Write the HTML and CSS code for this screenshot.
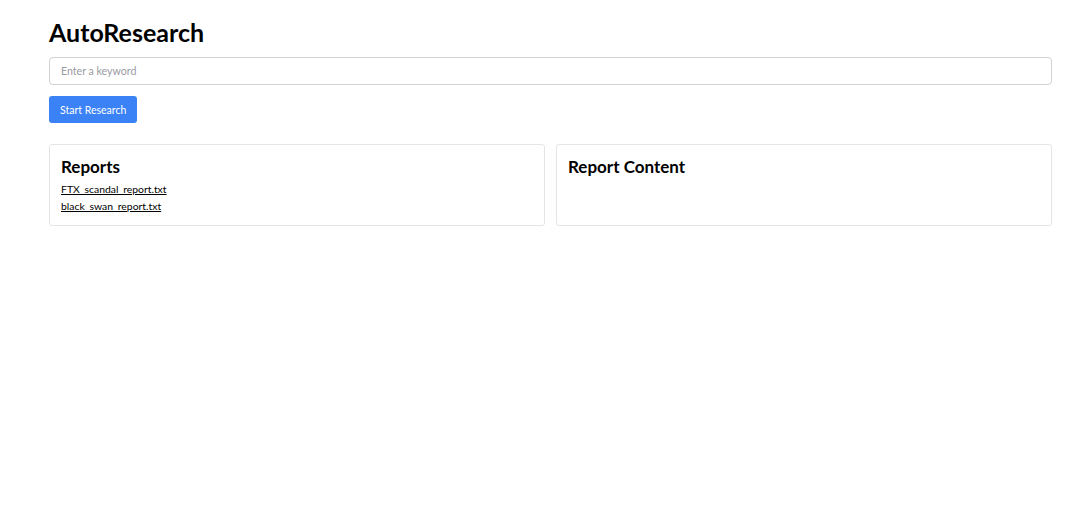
FILE: index.html
```html
<!DOCTYPE html>
<html lang="en">
<head>
    <meta charset="UTF-8">
    <meta name="viewport" content="width=device-width, initial-scale=1.0">
    <title>AutoResearch</title>
    <link rel="stylesheet" href="styles.css">
</head>
<body>
    <div class="container">
        <h1 class="title">AutoResearch</h1>

        <!-- keyword form -->
        <input type="text" class="keyword" placeholder="Enter a keyword">
        <button class="start-btn">Start Research</button>

        <div class="panels">
            <div class="panel">
                <h2 class="panel-title">Reports</h2>
                <ul class="report-list">
                    <li><a href="#">FTX_scandal_report.txt</a></li>
                    <li><a href="#">black_swan_report.txt</a></li>
                </ul>
            </div>
            <div class="panel">
                <h2 class="panel-title">Report Content</h2>
                <div class="report-content"></div>
            </div>
        </div>
    </div>
</body>
</html>
```

FILE: styles.css
```css
/* Page basics */
body {
    margin: 0;
    background-color: #fff;
    color: #000;
    font-family: Lato, "Noto Sans", sans-serif;
}

.container {
    width: 1003px;
    padding: 16px 0 0 49px;
}

.title {
    font-size: 25px;
    font-weight: 700;
    line-height: 32px;
    margin: 0 0 9px;
}

/* Keyword input and button */
.keyword {
    display: block;
    box-sizing: border-box;
    width: 100%;
    height: 28px;
    padding: 0 11px;
    border: 1px solid #d1d1d6;
    border-radius: 4px;
    font-family: inherit;
    font-size: 10.6px;
    color: #333;
    outline: none;
}

.keyword::placeholder {
    color: #9a9aa2;
}

.start-btn {
    display: block;
    margin-top: 11px;
    height: 27px;
    padding: 0 11px;
    border: none;
    border-radius: 3px;
    background-color: #3b82f6;
    color: #fff;
    font-family: inherit;
    font-size: 10.5px;
    cursor: pointer;
}

/* Two panels side by side */
.panels {
    display: grid;
    grid-template-columns: 1fr 1fr;
    gap: 11px;
    margin-top: 21px;
}

.panel {
    box-sizing: border-box;
    height: 82px;
    padding: 11px 11px;
    border: 1px solid #e5e5e8;
    border-radius: 3px;
}

.panel-title {
    font-size: 17px;
    font-weight: 700;
    line-height: 22px;
    margin: 0 0 3px;
}

.report-list {
    list-style: none;
    margin: 0;
    padding: 0;
    font-size: 10.4px;
    line-height: 17px;
}

.report-list a {
    color: #000;
}
```
